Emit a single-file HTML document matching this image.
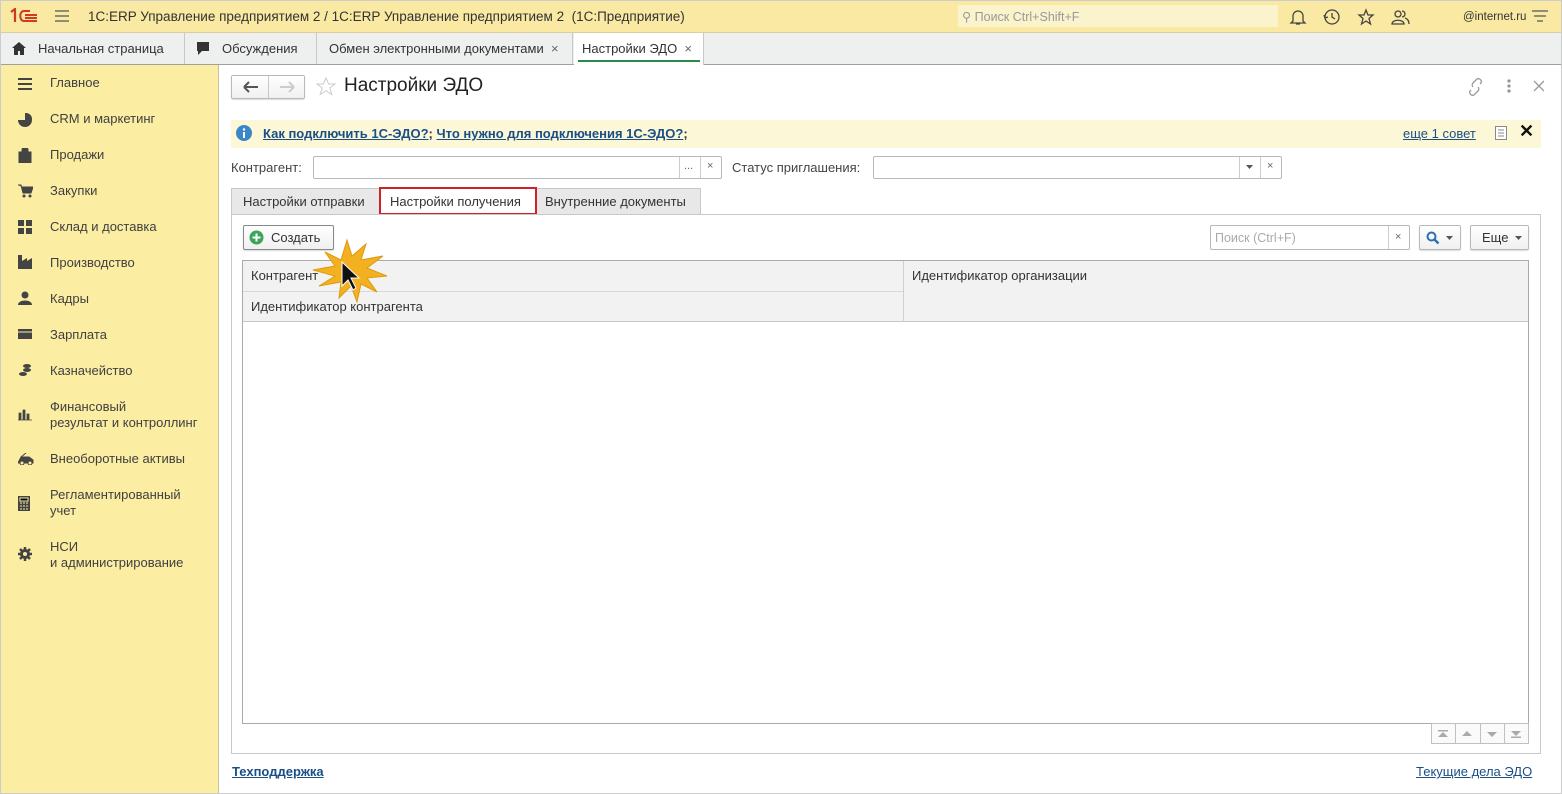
<!DOCTYPE html>
<html><head><meta charset="utf-8"><style>
*{box-sizing:border-box;margin:0;padding:0}
body{width:1562px;height:794px;position:relative;overflow:hidden;background:#fff;font-family:"Liberation Sans",Arial,sans-serif;font-size:13px;color:#333}
.a{position:absolute}
a,.lnk{color:#1a4f86;text-decoration:underline}
.side div.it{position:absolute;left:50px;font-size:13px;color:#404040;line-height:16px}
.side svg{position:absolute;left:18px}
.inp{position:absolute;border:1px solid #b9b9b9;border-radius:2px;background:#fff;height:23px}
.btn{position:absolute;border:1px solid #b9b9b9;border-radius:2px;background:linear-gradient(#fff,#f0f0f0);height:25px;box-shadow:0 1px 1px rgba(0,0,0,.15)}
</style></head><body>
<!-- top bar -->
<div class="a" style="left:0;top:0;width:1562px;height:33px;background:#f9e9a2;border-bottom:1px solid #d8cfa0"></div>
<svg class="a" style="left:9px;top:8px" width="30" height="16" viewBox="0 0 30 16"><path d="M2 4l4-3v13" stroke="#d23a1e" stroke-width="2.2" fill="none"/><path d="M21 3h-6c-5 0-5 10 0 10h13M16 7h12M16 10h12" stroke="#d23a1e" stroke-width="2" fill="none"/></svg>
<svg class="a" style="left:55px;top:10px" width="14" height="12"><path d="M0 1h14M0 6h14M0 11h14" stroke="#555" stroke-width="1.3"/></svg>
<div class="a" style="left:88px;top:9px;font-size:13.5px;color:#333">1С:ERP Управление предприятием 2 / 1С:ERP Управление предприятием 2 &nbsp;(1С:Предприятие)</div>
<div class="a" style="left:958px;top:5px;width:320px;height:22px;background:#fbf3cb"></div>
<div class="a" style="left:962px;top:9px;font-size:12.5px;color:#999">⚲ Поиск Ctrl+Shift+F</div>
<svg class="a" style="left:1288px;top:8px" width="124" height="18" fill="none" stroke="#444" stroke-width="1.3">
<path d="M5 13V8a5 5 0 0110 0v5l2 2H3zM8 16h4"/>
<circle cx="44" cy="9" r="7"/><path d="M44 5v4l3 2M36 7l1 3 3-1"/>
<path d="M78 2l2 5h5l-4 3.5 1.5 5.5-4.5-3-4.5 3 1.5-5.5-4-3.5h5z"/>
<circle cx="110" cy="6" r="3"/><path d="M104 16c0-5 12-5 12 0zM114 3a3 3 0 010 6M117 10c3 1 4 3 4 6"/></svg>
<div class="a" style="left:1463px;top:11px;font-size:11.5px;color:#333">@internet.ru</div>
<svg class="a" style="left:1532px;top:10px" width="16" height="14"><path d="M0 1h16M2 6h12M5 11h6" stroke="#555" stroke-width="1.3"/></svg>
<!-- tabs bar -->
<div class="a" style="left:0;top:33px;width:1562px;height:32px;background:#eef0f0;border-bottom:1px solid #a0a0a0"></div>
<div class="a" style="left:0;top:33px;width:185px;height:31px;border-right:1px solid #c8c8c8"></div>
<svg class="a" style="left:12px;top:42px" width="14" height="13"><path d="M7 0L0 6h2v7h4V9h2v4h4V6h2z" fill="#333"/></svg>
<div class="a" style="left:38px;top:41px;font-size:13px">Начальная страница</div>
<div class="a" style="left:185px;top:33px;width:132px;height:31px;border-right:1px solid #c8c8c8"></div>
<svg class="a" style="left:196px;top:41px" width="16" height="15"><path d="M1 1h12v9H6l-4 4v-4H1z" fill="#333"/></svg>
<div class="a" style="left:222px;top:41px">Обсуждения</div>
<div class="a" style="left:317px;top:33px;width:256px;height:31px;border-right:1px solid #c8c8c8"></div>
<div class="a" style="left:329px;top:41px">Обмен электронными документами <span style="color:#666">&nbsp;×</span></div>
<div class="a" style="left:574px;top:33px;width:130px;height:32px;background:#fff;border-right:1px solid #c8c8c8"></div>
<div class="a" style="left:582px;top:41px">Настройки ЭДО <span style="color:#666">&nbsp;×</span></div>
<div class="a" style="left:578px;top:60px;width:122px;height:2px;background:#2a8a4a"></div>
<!-- sidebar -->
<div class="a side" style="left:0;top:65px;width:219px;height:729px;background:#fbeda2;border-right:1px solid #c8c0a0">
<svg style="top:13px" width="14" height="12"><path d="M0 1h14M0 6h14M0 11h14" stroke="#444" stroke-width="2"/></svg><div class="it" style="top:10px">Главное</div>
<svg style="top:48px" width="14" height="14"><path d="M7 7V0a7 7 0 11-7 7z" fill="#444"/><path d="M8 6V0a6 6 0 016 6z" fill="#444"/></svg><div class="it" style="top:46px">CRM и маркетинг</div>
<svg style="top:83px" width="14" height="15"><path d="M1 4h12v11H1zM4 4V2a3 3 0 016 0v2" fill="#444" stroke="#444"/></svg><div class="it" style="top:82px">Продажи</div>
<svg style="top:119px" width="15" height="14"><path d="M0 1h3l2 8h8l2-6H4" fill="#444" stroke="#444"/><circle cx="6" cy="12" r="1.5" fill="#444"/><circle cx="12" cy="12" r="1.5" fill="#444"/></svg><div class="it" style="top:118px">Закупки</div>
<svg style="top:155px" width="14" height="14"><path d="M0 0h6v6H0zM8 0h6v6H8zM0 8h6v6H0zM8 8h6v6H8z" fill="#444"/></svg><div class="it" style="top:154px">Склад и доставка</div>
<svg style="top:190px" width="14" height="14"><path d="M0 14V0h4v6l5-3v3l5-3v11z" fill="#444"/></svg><div class="it" style="top:190px">Производство</div>
<svg style="top:226px" width="14" height="14"><circle cx="7" cy="4" r="3.5" fill="#444"/><path d="M0 14c0-6 14-6 14 0z" fill="#444"/></svg><div class="it" style="top:226px">Кадры</div>
<svg style="top:264px" width="14" height="10"><path d="M0 0h14v10H0z" fill="#444"/><path d="M0 3h14" stroke="#fbeda2"/></svg><div class="it" style="top:262px">Зарплата</div>
<svg style="top:298px" width="14" height="14"><ellipse cx="9" cy="3" rx="4" ry="2" fill="#444"/><ellipse cx="9" cy="7" rx="4" ry="2" fill="#444"/><ellipse cx="5" cy="11" rx="4" ry="2" fill="#444"/></svg><div class="it" style="top:298px">Казначейство</div>
<svg style="top:344px" width="14" height="12"><path d="M1 4h2v7H1zM5 1h2v10H5zM9 5h2v6H9zM0 11h14" fill="#444" stroke="#444" stroke-width=".8"/></svg><div class="it" style="top:334px">Финансовый<br>результат и контроллинг</div>
<svg style="top:388px" width="16" height="12"><path d="M0 10l3-6h8l4 3v3zM3 4l5-4" fill="#444" stroke="#444"/><circle cx="4" cy="10" r="2" fill="#fbeda2" stroke="#444"/><circle cx="12" cy="10" r="2" fill="#fbeda2" stroke="#444"/></svg><div class="it" style="top:386px">Внеоборотные активы</div>
<svg style="top:431px" width="12" height="15"><path d="M0 0h12v15H0z" fill="#444"/><path d="M2 2h8v3H2zM2 7h2M5 7h2M8 7h2M2 10h2M5 10h2M8 10h2M2 13h2M5 13h2M8 13h2" stroke="#fbeda2"/></svg><div class="it" style="top:422px">Регламентированный<br>учет</div>
<svg style="top:482px" width="14" height="14"><circle cx="7" cy="7" r="5" fill="#444"/><path d="M7 0v14M0 7h14M2 2l10 10M12 2L2 12" stroke="#444" stroke-width="2.5"/><circle cx="7" cy="7" r="2" fill="#fbeda2"/></svg><div class="it" style="top:474px">НСИ<br>и администрирование</div>
</div>
<!-- form header -->
<div class="btn" style="left:231px;top:75px;width:74px;height:24px"></div>
<div class="a" style="left:268px;top:76px;width:1px;height:22px;background:#c8c8c8"></div>
<svg class="a" style="left:242px;top:80px" width="60" height="14"><path d="M2 7h14M2 7l5-5M2 7l5 5" stroke="#555" stroke-width="2" fill="none"/><path d="M38 7h14M52 7l-5-5M52 7l-5 5" stroke="#ccc" stroke-width="2" fill="none"/></svg>
<svg class="a" style="left:316px;top:77px" width="20" height="19"><path d="M10 1l2.6 6h6.4l-5.2 4 2 6.5-5.8-3.8-5.8 3.8 2-6.5-5.2-4h6.4z" fill="none" stroke="#ccc"/></svg>
<div class="a" style="left:344px;top:75px;font-size:19px;color:#222">Настройки ЭДО</div>
<svg class="a" style="left:1468px;top:78px" width="76" height="18" fill="none" stroke="#999" stroke-width="1.3"><path d="M3 12l-1 1a3 3 0 004 4l4-4a3 3 0 000-4M12 6l1-1a3 3 0 00-4-4L5 5a3 3 0 000 4"/><circle cx="41" cy="3" r="1" fill="#666"/><circle cx="41" cy="8" r="1" fill="#666"/><circle cx="41" cy="13" r="1" fill="#666"/><path d="M66 3l10 10M76 3L66 13"/></svg>
<!-- hint bar -->
<div class="a" style="left:231px;top:120px;width:1310px;height:28px;background:#fcf7d6"></div>
<svg class="a" style="left:236px;top:125px" width="16" height="16"><circle cx="8" cy="8" r="8" fill="#3a86c8"/><rect x="7" y="7" width="2" height="6" fill="#fff"/><circle cx="8" cy="4.5" r="1.2" fill="#fff"/></svg>
<div class="a" style="left:263px;top:126px;font-weight:bold;font-size:13px"><span class="lnk">Как подключить 1С-ЭДО?</span>; <span class="lnk">Что нужно для подключения 1С-ЭДО?</span>;</div>
<div class="a lnk" style="left:1403px;top:126px">еще 1 совет</div>
<svg class="a" style="left:1495px;top:126px" width="12" height="14"><rect x=".5" y=".5" width="11" height="13" fill="#fff" stroke="#888"/><path d="M3 4h6M3 7h6M3 10h6" stroke="#888"/></svg>
<div class="a" style="left:1519px;top:121px;font-size:18px;font-weight:bold;color:#111">✕</div>
<!-- filters -->
<div class="a" style="left:231px;top:160px;color:#444">Контрагент:</div>
<div class="inp" style="left:313px;top:156px;width:409px"></div>
<div class="a" style="left:679px;top:157px;width:1px;height:21px;background:#ccc"></div>
<div class="a" style="left:700px;top:157px;width:1px;height:21px;background:#ccc"></div>
<div class="a" style="left:684px;top:160px;font-size:11px;color:#666">...</div>
<div class="a" style="left:707px;top:160px;font-size:11px;color:#666">×</div>
<div class="a" style="left:732px;top:160px;color:#444">Статус приглашения:</div>
<div class="inp" style="left:873px;top:156px;width:409px"></div>
<div class="a" style="left:1239px;top:157px;width:1px;height:21px;background:#ccc"></div>
<div class="a" style="left:1260px;top:157px;width:1px;height:21px;background:#ccc"></div>
<svg class="a" style="left:1246px;top:165px" width="7" height="5"><path d="M0 0h7L3.5 4z" fill="#555"/></svg>
<div class="a" style="left:1267px;top:160px;font-size:11px;color:#666">×</div>
<!-- tabs -->
<div class="a" style="left:231px;top:188px;width:470px;height:26px;background:#e8e8e8;border:1px solid #c8c8c8;border-bottom:none"></div>
<div class="a" style="left:243px;top:194px;color:#333">Настройки отправки</div>
<div class="a" style="left:379px;top:187px;width:158px;height:28px;background:#fff;border:2px solid #d0202a"></div>
<div class="a" style="left:390px;top:194px;color:#333">Настройки получения</div>
<div class="a" style="left:545px;top:194px;color:#333">Внутренние документы</div>
<div class="a" style="left:231px;top:214px;width:1310px;height:540px;border:1px solid #c8c8c8"></div>
<div class="a" style="left:537px;top:214px;width:1004px;height:1px;background:#c8c8c8"></div>
<!-- toolbar -->
<div class="btn" style="left:243px;top:225px;width:91px;height:25px;border-color:#888"></div>
<svg class="a" style="left:249px;top:230px" width="15" height="15"><circle cx="7.5" cy="7.5" r="7" fill="#3aa55a"/><path d="M7.5 3.5v8M3.5 7.5h8" stroke="#fff" stroke-width="2"/></svg>
<div class="a" style="left:271px;top:230px;font-size:13px">Создать</div>
<div class="inp" style="left:1210px;top:225px;width:200px;height:25px"></div>
<div class="a" style="left:1388px;top:226px;width:1px;height:23px;background:#ccc"></div>
<div class="a" style="left:1215px;top:231px;font-size:12.5px;color:#aaa">Поиск (Ctrl+F)</div>
<div class="a" style="left:1395px;top:231px;font-size:11px;color:#666">×</div>
<div class="btn" style="left:1419px;top:225px;width:42px"></div>
<svg class="a" style="left:1426px;top:231px" width="14" height="14"><circle cx="5.5" cy="5.5" r="4" fill="none" stroke="#2a6fb0" stroke-width="2"/><path d="M8.5 8.5l4 4" stroke="#2a6fb0" stroke-width="2.5"/></svg>
<svg class="a" style="left:1446px;top:236px" width="7" height="5"><path d="M0 0h7L3.5 4z" fill="#555"/></svg>
<div class="btn" style="left:1470px;top:225px;width:59px"></div>
<div class="a" style="left:1482px;top:230px;color:#333">Еще</div>
<svg class="a" style="left:1515px;top:236px" width="7" height="5"><path d="M0 0h7L3.5 4z" fill="#555"/></svg>
<!-- table -->
<div class="a" style="left:242px;top:260px;width:1287px;height:464px;border:1px solid #aaa;background:#fff"></div>
<div class="a" style="left:243px;top:261px;width:1285px;height:61px;background:#f2f2f2;border-bottom:1px solid #c8c8c8"></div>
<div class="a" style="left:903px;top:261px;width:1px;height:61px;background:#d0d0d0"></div>
<div class="a" style="left:243px;top:291px;width:660px;height:1px;background:#d8d8d8"></div>
<div class="a" style="left:251px;top:268px;color:#333">Контрагент</div>
<div class="a" style="left:251px;top:299px;color:#333">Идентификатор контрагента</div>
<div class="a" style="left:912px;top:268px;color:#333">Идентификатор организации</div>
<div class="a" style="left:1431px;top:723px;width:98px;height:21px;border:1px solid #c0c0c0;background:#fafafa"></div>
<svg class="a" style="left:1431px;top:723px" width="98" height="21"><path d="M24.5 0v21M49.5 0v21M73.5 0v21" stroke="#c0c0c0"/><g fill="#aaa"><path d="M7 7h10v1.5H7zM7 14l5-5 5 5zM31 13l5-5 5 5zM56 9h10l-5 5zM80 8h10l-5 5zM80 13.5h10V15H80z"/></g></svg>
<!-- footer -->
<div class="a lnk" style="left:232px;top:764px;font-weight:bold">Техподдержка</div>
<div class="a lnk" style="left:1416px;top:764px">Текущие дела ЭДО</div>
<!-- burst + cursor -->
<svg class="a" style="left:305px;top:238px" width="85" height="65" viewBox="0 0 85 65"><path d="M42 2l5 16 14-12-5 16 22-4-16 12 20 8-20 2 10 14-16-8-4 18-6-16-12 12 2-16-22 4 16-10-22-6 22-4-10-14 16 8z" fill="#f3b021" stroke="#e09a10"/><path d="M37 24v24l6-6 5 10 3-2-5-10h8z" fill="#111" stroke="#fff" stroke-width="1"/></svg>
<div class="a" style="left:0;top:0;width:1562px;height:794px;border:1px solid #ccc;pointer-events:none"></div>
</body></html>
